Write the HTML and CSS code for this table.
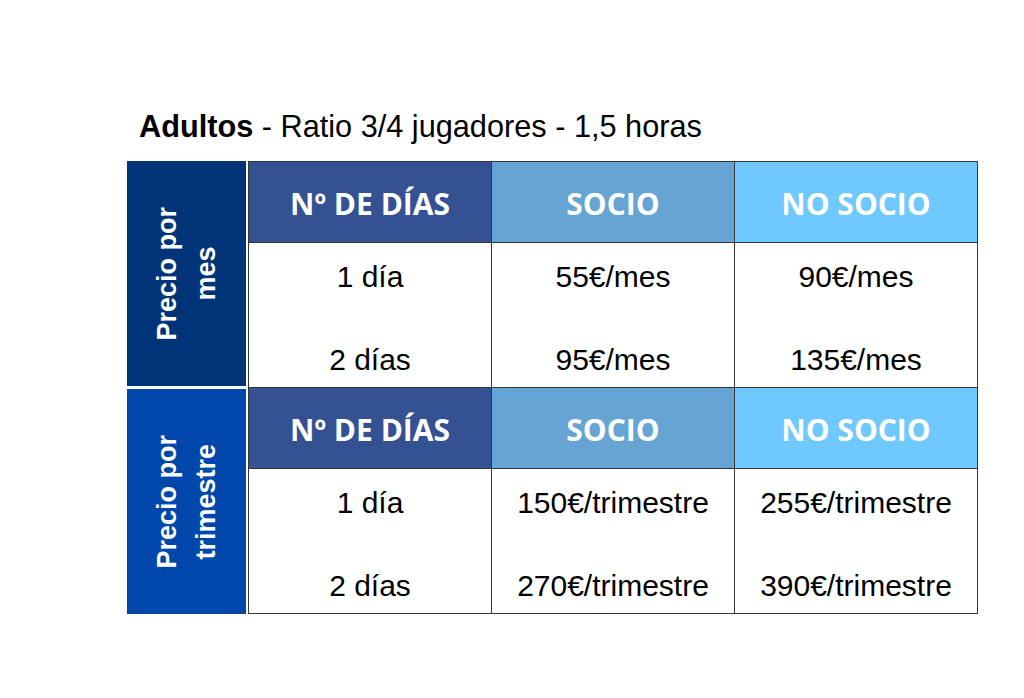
FILE: index.html
```html
<!DOCTYPE html>
<html lang="es">
<head>
<meta charset="utf-8">
<title>Adultos - Precios</title>
<link rel="stylesheet" href="styles.css">
</head>
<body>
<div class="page">
  <h1 class="title"><strong>Adultos</strong> - Ratio 3/4 jugadores - 1,5 horas</h1>
  <div class="board">
    <div class="side">
      <div class="side-block side-month"><span class="side-label">Precio por<br>mes</span></div>
      <div class="side-block side-quarter"><span class="side-label">Precio por<br>trimestre</span></div>
    </div>
    <div class="grid">
      <div class="head head-days">Nº DE DÍAS</div>
      <div class="head head-socio">SOCIO</div>
      <div class="head head-nosocio">NO SOCIO</div>
      <div class="cell"><span>1 día</span><span>2 días</span></div>
      <div class="cell"><span>55€/mes</span><span>95€/mes</span></div>
      <div class="cell"><span>90€/mes</span><span>135€/mes</span></div>
      <div class="head head-days">Nº DE DÍAS</div>
      <div class="head head-socio">SOCIO</div>
      <div class="head head-nosocio">NO SOCIO</div>
      <div class="cell"><span>1 día</span><span>2 días</span></div>
      <div class="cell"><span>150€/trimestre</span><span>270€/trimestre</span></div>
      <div class="cell"><span>255€/trimestre</span><span>390€/trimestre</span></div>
    </div>
  </div>
</div>
</body>
</html>
```

FILE: styles.css
```css
html, body {
  margin: 0;
  padding: 0;
  background: #ffffff;
}

.page {
  width: 1024px;
  height: 698px;
  padding-top: 109px;
  box-sizing: border-box;
  font-family: "Liberation Sans", Arial, sans-serif;
  color: #000000;
}

.title {
  margin: 0 0 17px 0;
  padding-left: 139px;
  font-size: 30.7px;
  font-weight: normal;
  line-height: 35px;
  white-space: nowrap;
}

.title strong {
  font-weight: bold;
}

.board {
  display: flex;
  gap: 2px;
  margin-left: 127px;
}

.side {
  display: flex;
  flex-direction: column;
  gap: 3px;
  width: 119px;
}

.side-block {
  height: 225px;
  display: flex;
  align-items: center;
  justify-content: center;
  color: #ffffff;
}

.side-month {
  background: #003478;
}

.side-quarter {
  background: #0047ab;
}

.side-label {
  writing-mode: vertical-rl;
  transform: rotate(180deg);
  text-align: center;
  font-weight: bold;
  font-size: 27px;
  line-height: 39px;
}

.grid {
  display: grid;
  grid-template-columns: 242px 242px 242px;
  grid-template-rows: 80px 144px 80px 144px;
  gap: 1px;
  padding: 1px;
  background: #363636;
}

.head {
  display: flex;
  align-items: center;
  justify-content: center;
  font-family: "Open Sans", "Noto Sans", sans-serif;
  font-weight: bold;
  font-size: 30px;
  color: #ffffff;
  padding-top: 3px;
  box-sizing: border-box;
}

.head-days {
  background: #345194;
}

.head-socio {
  background: #66a4d3;
}

.head-nosocio {
  background: #70c9fe;
}

.cell {
  background: #ffffff;
  display: flex;
  flex-direction: column;
  align-items: center;
  gap: 49px;
  padding-top: 17px;
  box-sizing: border-box;
  font-size: 30px;
  line-height: 34px;
}
```
